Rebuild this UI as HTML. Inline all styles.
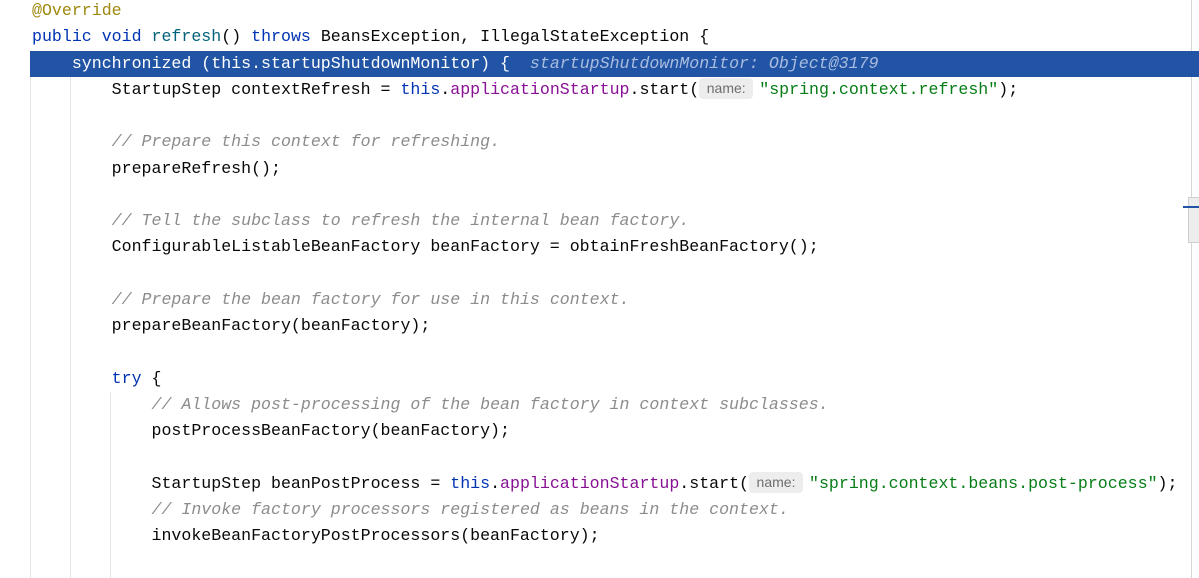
<!DOCTYPE html>
<html><head><meta charset="utf-8"><style>
html,body{margin:0;padding:0;background:#fff;width:1199px;height:578px;overflow:hidden;position:relative}
.code{position:absolute;left:0;top:-2px;font-family:"Liberation Mono",monospace;font-size:16.6px;line-height:26.25px;color:#080808}
.l{height:26.25px;padding-left:32px;white-space:pre}
.sel{background:#2154a4;color:#fff;margin-left:30px;padding-left:2px;width:1200px;position:relative}
.sel .h{color:#a9bde0;font-style:italic}
.a{color:#9e880d}.k{color:#0033b3}.m{color:#00627a}.f{color:#871094}.s{color:#067d17}.c{color:#8c8c8c;font-style:italic}
.hint{display:inline-block;width:54px;height:21px;line-height:21px;background:#ededed;color:#6e6e6e;font-family:"Liberation Sans",sans-serif;font-size:14px;text-align:center;border-radius:4px;margin-right:6px;vertical-align:1px;font-style:normal}
.g{position:absolute;width:1px;background:#e4e4e4}
</style></head><body>
<div class="g" style="left:30px;top:76px;height:502px"></div>
<div class="g" style="left:70px;top:76px;height:502px"></div>
<div class="g" style="left:110px;top:392px;height:186px"></div>
<div class="g" style="left:1191px;top:0;height:578px;background:#d6d6d6"></div>
<div style="position:absolute;left:1188px;top:197px;width:11px;height:44px;background:#ededed;border:1px solid #cfcfcf"></div>
<div style="position:absolute;left:1183px;top:206px;width:16px;height:2px;background:#2154a4"></div>
<div class="code"><div class="l"><span class="a">@Override</span></div><div class="l"><span class="k">public void</span> <span class="m">refresh</span>() <span class="k">throws</span> BeansException, IllegalStateException {</div><div class="l sel">    synchronized (this.startupShutdownMonitor) {  <span class="h">startupShutdownMonitor: Object@3179</span></div><div class="l">        StartupStep contextRefresh = <span class="k">this</span>.<span class="f">applicationStartup</span>.start(<span class="hint">name:</span><span class="s">"spring.context.refresh"</span>);</div><div class="l"> </div><div class="l">        <span class="c">// Prepare this context for refreshing.</span></div><div class="l">        prepareRefresh();</div><div class="l"> </div><div class="l">        <span class="c">// Tell the subclass to refresh the internal bean factory.</span></div><div class="l">        ConfigurableListableBeanFactory beanFactory = obtainFreshBeanFactory();</div><div class="l"> </div><div class="l">        <span class="c">// Prepare the bean factory for use in this context.</span></div><div class="l">        prepareBeanFactory(beanFactory);</div><div class="l"> </div><div class="l">        <span class="k">try</span> {</div><div class="l">            <span class="c">// Allows post-processing of the bean factory in context subclasses.</span></div><div class="l">            postProcessBeanFactory(beanFactory);</div><div class="l"> </div><div class="l">            StartupStep beanPostProcess = <span class="k">this</span>.<span class="f">applicationStartup</span>.start(<span class="hint">name:</span><span class="s">"spring.context.beans.post-process"</span>);</div><div class="l">            <span class="c">// Invoke factory processors registered as beans in the context.</span></div><div class="l">            invokeBeanFactoryPostProcessors(beanFactory);</div></div>
</body></html>
